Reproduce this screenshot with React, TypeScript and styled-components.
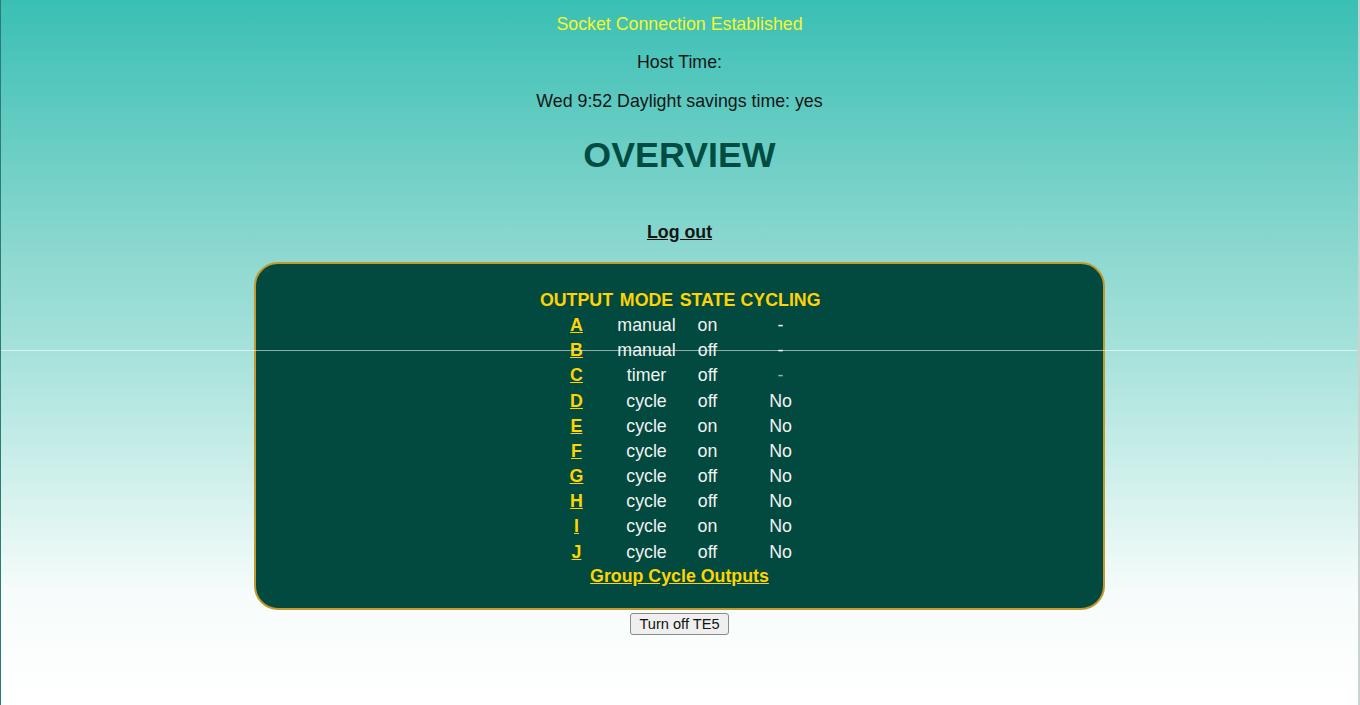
import styled, { createGlobalStyle } from 'styled-components';

const GlobalStyle = createGlobalStyle`
  html, body {
    margin: 0;
    padding: 0;
  }
  body {
    font-family: "Liberation Sans", Arial, sans-serif;
    font-size: 17.8px;
    color: #111;
  }
`;

const Page = styled.div`
  position: relative;
  box-sizing: border-box;
  min-height: 705px;
  width: 1360px;
  display: flex;
  flex-direction: column;
  align-items: center;
  background: linear-gradient(to bottom, #3abfb4 0%, #8fd9d1 37%, #a6e2db 50%, #f6fcfb 84%, #ffffff 100%);
  border-left: 1px solid #2a7d74;
  border-right: 2px solid #c9d3d2;
`;

const SeamLine = styled.div`
  position: absolute;
  left: 0;
  right: 0;
  top: 350px;
  height: 1px;
  background: rgba(255, 255, 255, 0.55);
  pointer-events: none;
`;

const Line = styled.p<{ $top: number; $color?: string }>`
  margin: ${(p) => p.$top}px 0 0;
  line-height: 20px;
  color: ${(p) => p.$color || '#151515'};
`;

const Title = styled.h1`
  margin: 24px 0 0;
  font-size: 35.8px;
  line-height: 40px;
  font-weight: bold;
  color: #004c42;
`;

const LogOut = styled.a`
  margin-top: 47px;
  line-height: 20px;
  font-weight: bold;
  color: #151515;
  text-decoration: underline;
  cursor: pointer;
`;

const Panel = styled.section`
  box-sizing: border-box;
  margin-top: 20px;
  width: 851px;
  height: 348px;
  padding: 23.2px 0 0;
  background: #02493f;
  border: 2px solid #c29a2e;
  border-radius: 24px;
  display: flex;
  flex-direction: column;
  align-items: center;
`;

const Table = styled.div`
  display: grid;
  grid-template-columns: 80px 60px 62px 84px;
  grid-auto-rows: 25.2px;
  align-items: center;
  justify-items: center;
`;

const HeadCell = styled.div`
  font-weight: bold;
  color: #ffd400;
  line-height: 20px;
`;

const Cell = styled.div<{ $dim?: boolean }>`
  color: ${(p) => (p.$dim ? '#8fb3ad' : '#f2f2f2')};
  line-height: 20px;
`;

const YellowLink = styled.a`
  font-weight: bold;
  color: #ffd400;
  text-decoration: underline;
  line-height: 20px;
  cursor: pointer;
`;

const GroupLink = styled(YellowLink)`
  margin-top: 1.6px;
`;

const Button = styled.button`
  margin-top: 3px;
  height: 22px;
  padding: 0 8px;
  font-family: "Liberation Sans", Arial, sans-serif;
  font-size: 14.6px;
  color: #111;
  background: #efefef;
  border: 1px solid #8a8a8a;
  border-radius: 3px;
`;

const outputs = [
  { id: 'A', mode: 'manual', state: 'on', cycling: '-' },
  { id: 'B', mode: 'manual', state: 'off', cycling: '-' },
  { id: 'C', mode: 'timer', state: 'off', cycling: '-', dim: true },
  { id: 'D', mode: 'cycle', state: 'off', cycling: 'No' },
  { id: 'E', mode: 'cycle', state: 'on', cycling: 'No' },
  { id: 'F', mode: 'cycle', state: 'on', cycling: 'No' },
  { id: 'G', mode: 'cycle', state: 'off', cycling: 'No' },
  { id: 'H', mode: 'cycle', state: 'off', cycling: 'No' },
  { id: 'I', mode: 'cycle', state: 'on', cycling: 'No' },
  { id: 'J', mode: 'cycle', state: 'off', cycling: 'No' },
];

export default function App() {
  return (
    <Page>
      <GlobalStyle />
      <Line $top={14} $color="#f6f62a">Socket Connection Established</Line>
      <Line $top={18}>Host Time:</Line>
      <Line $top={19}>Wed 9:52 Daylight savings time: yes</Line>
      <Title>OVERVIEW</Title>
      <LogOut>Log out</LogOut>
      <Panel>
        <Table>
          <HeadCell>OUTPUT</HeadCell>
          <HeadCell>MODE</HeadCell>
          <HeadCell>STATE</HeadCell>
          <HeadCell>CYCLING</HeadCell>
          {outputs.map((o) => [
            <YellowLink key={o.id + 'l'}>{o.id}</YellowLink>,
            <Cell key={o.id + 'm'}>{o.mode}</Cell>,
            <Cell key={o.id + 's'}>{o.state}</Cell>,
            <Cell key={o.id + 'c'} $dim={o.dim}>{o.cycling}</Cell>,
          ])}
        </Table>
        <GroupLink>Group Cycle Outputs</GroupLink>
      </Panel>
      <Button>Turn off TE5</Button>
      <SeamLine />
    </Page>
  );
}
